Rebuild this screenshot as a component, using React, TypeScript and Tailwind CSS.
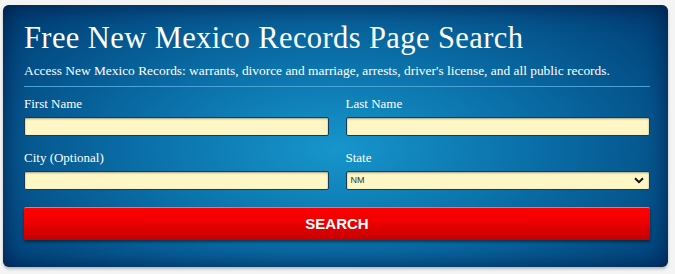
import React from "react";

export default function App() {
  const serif = { fontFamily: '"Liberation Serif", "DejaVu Serif", serif' };
  const inputCls =
    "mt-[6px] block w-full h-[19px] bg-[#fff6c6] border border-[#17395a] rounded-[2px] shadow-[inset_0_1px_2px_rgba(0,0,0,0.35)] outline-none";
  return (
    <div className="w-[675px] h-[274px] bg-[#f4f4f4] pt-[5px] pl-[3px]">
      <div
        className="w-[665px] h-[262px] rounded-[6px] px-[21px] pt-[16px] shadow-[inset_0_0_22px_rgba(0,20,60,0.75),0_2px_3px_rgba(0,0,0,0.25)] bg-[radial-gradient(ellipse_70%_85%_at_50%_55%,#1696cc_0%,#0a6ca5_45%,#034a82_80%,#003467_100%)]"
        style={serif}
      >
        <h1 className="text-white text-[30.5px] leading-[34px] tracking-[0.4px]">
          Free New Mexico Records Page Search
        </h1>
        <p className="text-white text-[13.4px] leading-[16px] mt-[8px]">
          Access New Mexico Records: warrants, divorce and marriage, arrests, driver's license, and all public records.
        </p>
        <div className="h-px bg-[#4aa3d6] mt-[7px] w-[626px]" />
        <div className="grid grid-cols-2 gap-x-[17px] w-[626px] mt-[9px]">
          <div>
            <div className="text-white text-[13px] leading-[15px]">First Name</div>
            <input className={inputCls} />
          </div>
          <div>
            <div className="text-white text-[13px] leading-[15px]">Last Name</div>
            <input className={inputCls} />
          </div>
          <div className="mt-[14px]">
            <div className="text-white text-[13px] leading-[15px]">City (Optional)</div>
            <input className={inputCls} />
          </div>
          <div className="mt-[14px]">
            <div className="text-white text-[13px] leading-[15px]">State</div>
            <div className="mt-[6px] relative w-full h-[19px] bg-[#fff6c6] border border-[#17395a] rounded-[2px] shadow-[inset_0_1px_2px_rgba(0,0,0,0.35)] flex items-center pl-[4px]">
              <span className="text-[9px] text-[#333]" style={{ fontFamily: '"Liberation Sans", Arial, sans-serif' }}>NM</span>
              <svg className="absolute right-[5px] top-[5px]" width="10" height="7" viewBox="0 0 10 7">
                <path d="M1 1.2 L5 5.2 L9 1.2" fill="none" stroke="#111" strokeWidth="2" />
              </svg>
            </div>
          </div>
        </div>
        <button
          className="mt-[17px] w-[626px] h-[33px] rounded-[2px] bg-[linear-gradient(to_bottom,#ff0000_0%,#f00000_40%,#c40000_100%)] border-t border-[#ff6a6a] shadow-[0_2px_3px_rgba(0,0,0,0.45)] text-white font-bold text-[15px]"
          style={{ fontFamily: '"Liberation Sans", Arial, sans-serif' }}
        >
          SEARCH
        </button>
      </div>
    </div>
  );
}
